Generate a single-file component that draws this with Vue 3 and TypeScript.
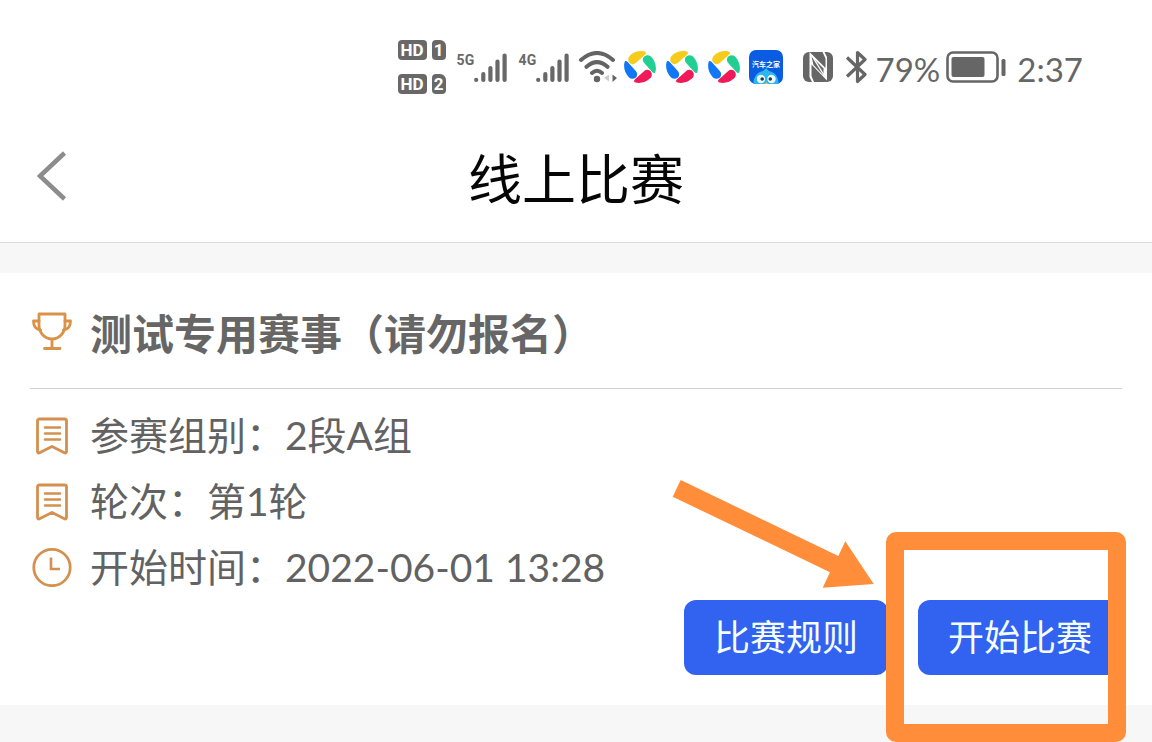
<script setup lang="ts">
interface Detail {
  icon: 'bookmark' | 'clock'
  label: string
  value: string
}

const details: Detail[] = [
  { icon: 'bookmark', label: '参赛组别', value: '2段A组' },
  { icon: 'bookmark', label: '轮次', value: '第1轮' },
  { icon: 'clock', label: '开始时间', value: '2022-06-01 13:28' },
]

const networks: string[] = ['5G', '4G']
const simCards: number[] = [1, 2]
const petalColors: string[] = ['#22cf92', '#f01a58', '#1277f5', '#f7cb1c']
</script>

<template>
  <div class="page">
    <div class="status">
      <div class="sims">
        <div v-for="n in simCards" :key="n" class="sim">
          <span class="hd">HD</span><span class="slot">{{ n }}</span>
        </div>
      </div>
      <div v-for="net in networks" :key="net" class="network">
        <span class="net-name">{{ net }}</span>
        <svg width="34" height="31" viewBox="0 0 34 31" aria-hidden="true">
          <g fill="none" stroke="#686868" stroke-width="4.2" stroke-linecap="round">
            <path d="M2.2 27.8v.1M9.3 22.2v5.7M16.4 16v11.9M23.5 9.5v18.4M30.6 3.5v24.4" />
          </g>
        </svg>
      </div>
      <svg class="wifi" width="40" height="32" viewBox="0 0 40 32" aria-hidden="true">
        <g fill="none" stroke="#646464" stroke-width="4" stroke-linecap="round">
          <path d="M3 9Q19-5 35 9M8.5 15.8Q19 6.5 29.5 15.8M14 22Q19 17.5 24 22" />
        </g>
        <circle cx="19" cy="28" r="3.2" fill="#646464" />
        <path d="M26 27l5-3.5v7z" fill="#ccc" />
        <path d="M34.5 23.5L39 27l-4.5 4z" fill="#646464" />
      </svg>
      <div class="apps">
        <svg v-for="b in 3" :key="b" width="32" height="32" viewBox="0 0 32 32" aria-hidden="true">
          <path
            v-for="(color, i) in petalColors"
            :key="color"
            :fill="color"
            :transform="`rotate(${i * 90} 16 16)`"
            d="M19 7.5C19.8 4.300 24 3 27 5.500C31 9.500 32.800 15.500 31.500 20.500C31 22.500 29.500 22.300 28.300 21L20.200 12C19 10.600 18.600 9.200 19 7.500Z"
          />
        </svg>
      </div>
      <svg class="auto" width="34" height="34" viewBox="0 0 34 34" role="img" aria-label="汽车之家">
        <defs>
          <clipPath id="tile"><rect width="34" height="34" rx="7" /></clipPath>
        </defs>
        <g clip-path="url(#tile)">
          <rect width="34" height="34" fill="#0a5de2" />
          <path d="M4.500 34C4 27 9 21.500 14 21L17 18L20 21C25 21.500 30 27 29.500 34Z" fill="#2db5ef" />
          <circle cx="12" cy="29" r="4.200" fill="#eafcff" />
          <circle cx="22.500" cy="29" r="4.200" fill="#eafcff" />
          <circle cx="13.200" cy="29" r="1.800" fill="#1b3b55" />
          <circle cx="21.300" cy="29" r="1.800" fill="#1b3b55" />
          <path d="M15.500 34l1.700-2 1.800 2z" fill="#f4b832" />
        </g>
        <text x="17" y="17" text-anchor="middle" class="auto-text">汽车之家</text>
      </svg>
      <svg class="nfc" width="30" height="30" viewBox="0 0 30 30" aria-hidden="true">
        <rect width="30" height="30" rx="6" fill="#666" />
        <path d="M6.500 0L22.500 16V6.500L19.500 0H21.500L24 5V28.500L8.500 12.500V24L11 30H9L6.500 25Z" fill="#fff" />
        <path d="M8.500 4.500L20.500 16.500V23.500L10.500 13Z" fill="#666" />
        <path d="M8.500 3L21.500 24" fill="none" stroke="#fff" stroke-width="1.400" />
      </svg>
      <svg class="bluetooth" width="22" height="34" viewBox="0 0 22 34" aria-hidden="true">
        <path d="M2 7.5L20 24.5L12.5 31.5V2.5L20 9.5L2 26.5" fill="none" stroke="#666" stroke-width="3.2" stroke-linejoin="round" />
      </svg>
      <span class="reading percent">79%</span>
      <svg class="battery" width="60" height="32" viewBox="0 0 60 32" aria-hidden="true">
        <rect x="1.5" y="1.5" width="50" height="29" rx="5.5" fill="none" stroke="#666" stroke-width="2.6" />
        <rect x="5.5" y="6" width="33" height="20" rx="2" fill="#666" />
        <rect x="55.5" y="8" width="4" height="17" rx="1.5" fill="#666" />
      </svg>
      <time class="reading clock">2:37</time>
    </div>

    <header class="bar">
      <button class="back" type="button" aria-label="返回">
        <svg width="30" height="50" viewBox="0 0 30 50" aria-hidden="true">
          <path d="M27.5 2L3 25L27.5 48" fill="none" stroke="#8b8b90" stroke-width="4.5" />
        </svg>
      </button>
      <h1>线上比赛</h1>
    </header>

    <main class="card">
      <div class="heading">
        <svg width="40" height="40" viewBox="0 0 40 40" aria-hidden="true">
          <g fill="none" stroke="#da9148" stroke-width="2.8" stroke-linecap="round" stroke-linejoin="round">
            <path d="M7 3H33V14C33 22 27 28 20 28S7 22 7 14ZM20 28V37M12.5 37.5H28" />
            <path d="M7 10H1.5C1.500 15 4 18.500 8.500 19M33 10H38.500C38.500 15 36 18.500 31.500 19" />
          </g>
        </svg>
        <h2>测试专用赛事（请勿报名）</h2>
      </div>

      <ul class="details">
        <li v-for="item in details" :key="item.label">
          <svg v-if="item.icon === 'bookmark'" width="40" height="40" viewBox="0 0 40 40" aria-hidden="true">
            <g fill="none" stroke="#d4904e" stroke-width="2.8" stroke-linecap="round" stroke-linejoin="round">
              <path d="M7.5 4H32.500Q34.500 4 34.500 6V36Q34.500 39 32 37.500L20 31.500L8 37.500Q5.500 39 5.500 36V6Q5.500 4 7.500 4Z" />
              <path d="M13 12.500H28M13 18.500H28M13 24.500H28" stroke-width="2.600" />
            </g>
          </svg>
          <svg v-else width="40" height="40" viewBox="0 0 40 40" aria-hidden="true">
            <circle cx="20" cy="20.500" r="18.200" fill="none" stroke="#d4904e" stroke-width="2.800" />
            <path d="M19 10.500V22H28" fill="none" stroke="#d4904e" stroke-width="2.600" />
          </svg>
          <span>{{ item.label }}：{{ item.value }}</span>
        </li>
      </ul>

      <div class="actions">
        <svg class="arrow" width="202" height="108" viewBox="0 0 202 108" aria-hidden="true">
          <path d="M8.7 0L.7 16.7L158 92.3L150.7 107.7L201.7 104L173.3 61.3L166.3 76Z" fill="#ff8d3a" />
        </svg>
        <button class="action" type="button">比赛规则</button>
        <div class="marked">
          <button class="action" type="button">开始比赛</button>
          <span class="frame"></span>
        </div>
      </div>
    </main>
  </div>
</template>

<style>
body {
  margin: 0;
  background: #f7f7f7;
}
</style>

<style scoped>
.page {
  min-height: 100vh;
  overflow: hidden;
  box-sizing: border-box;
  background: #f7f7f7;
  color: #626262;
  font-family: Lato, "Noto Sans CJK SC", sans-serif;
}

h1,
h2,
ul {
  margin: 0;
  padding: 0;
}

svg {
  display: block;
  flex: none;
}

button {
  border: 0;
  padding: 0;
  font-family: inherit;
  cursor: pointer;
}

.status {
  display: flex;
  align-items: center;
  justify-content: flex-end;
  height: 110px;
  padding: 24px 69px 0 0;
  box-sizing: border-box;
  background: #fff;
}

.sims {
  display: flex;
  flex-direction: column;
  gap: 14px;
}

.sim {
  display: flex;
  gap: 5px;
}

.hd,
.slot {
  height: 20px;
  border-radius: 4px;
  background: #686868;
  color: #fff;
  font: bold 17px/20px Roboto, sans-serif;
  text-align: center;
}

.hd {
  width: 29px;
}

.slot {
  width: 14px;
  border-top-right-radius: 6px;
}

.network {
  display: flex;
  align-items: flex-start;
  margin-left: 11px;
}

.net-name {
  width: 17px;
  color: #686868;
  font: bold 14px/16px Roboto, sans-serif;
}

.wifi {
  margin-left: 8px;
}

.apps {
  display: flex;
  gap: 10px;
  margin-left: 6px;
}

.auto {
  margin-left: 9px;
}

.auto-text {
  fill: #fff;
  font: bold 7px "Noto Sans CJK SC", sans-serif;
}

.nfc {
  margin-left: 20px;
}

.bluetooth {
  margin-left: 12px;
}

.reading {
  padding-top: 3px;
  color: #666;
  font-size: 33px;
  line-height: 40px;
}

.percent {
  margin-left: 9px;
}

.battery {
  margin-left: 6px;
}

.clock {
  margin-left: 11px;
}

.bar {
  display: grid;
  grid-template-columns: 1fr auto 1fr;
  align-items: center;
  height: 133px;
  padding: 0 37px;
  box-sizing: border-box;
  border-bottom: 1px solid #dcdcdc;
  background: #fff;
}

.back {
  justify-self: start;
  background: none;
}

h1 {
  padding-top: 8px;
  color: #060606;
  font-size: 54px;
  font-weight: 400;
  line-height: 80px;
}

.card {
  margin-top: 30px;
  padding: 0 30px 30px;
  background: #fff;
}

.heading {
  display: flex;
  align-items: center;
  gap: 18px;
  height: 116px;
  padding-left: 2px;
  box-sizing: border-box;
  border-bottom: 1px solid #d2d2d2;
}

h2 {
  padding-top: 6px;
  color: #666;
  font-size: 42px;
  font-weight: 700;
  line-height: 60px;
}

.details {
  padding-top: 13px;
  list-style: none;
}

.details li {
  display: flex;
  align-items: center;
  gap: 18px;
  padding-left: 2px;
  font-size: 39px;
  line-height: 66px;
}

.actions {
  position: relative;
  display: flex;
  justify-content: flex-end;
  gap: 30px;
}

.action {
  display: block;
  width: 204px;
  height: 75px;
  border-radius: 12px;
  background: #3262f0;
  color: #f4feff;
  font-size: 36px;
  line-height: 75px;
}

.marked {
  position: relative;
}

.frame {
  position: absolute;
  inset: -68px -4px -67px -32px;
  border: 18px solid #ff8d3a;
  border-radius: 10px;
  pointer-events: none;
}

.arrow {
  position: absolute;
  top: -120px;
  right: 248px;
}
</style>
